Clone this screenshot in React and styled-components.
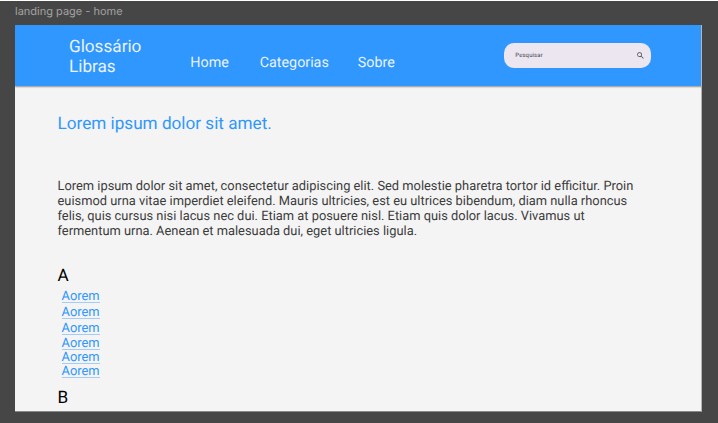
import React from "react";
import styled, { createGlobalStyle } from "styled-components";

const GlobalStyle = createGlobalStyle`
  * { box-sizing: border-box; }
  body { margin: 0; background: #464646; font-family: Roboto, sans-serif; text-rendering: geometricPrecision; }
  h1, h2, p, ul { margin: 0; padding: 0; font-weight: 400; }
`;

const Canvas = styled.div`
  width: 718px;
  height: 423px;
  overflow: hidden;
  border-top: 1px solid #fff;
  background: #464646;
  padding-left: 15px;
`;

const FrameLabel = styled.div`
  height: 24px;
  padding-top: 3px;
  font: 400 11px/14px Inter, sans-serif;
  color: #a2a2a2;
`;

const Frame = styled.main`
  width: 687px;
  height: 387px;
  overflow: hidden;
  background: #f4f4f4;
  border-right: 1px solid #b4b4b4;
  border-bottom: 1px solid #858a8a;
`;

const Header = styled.header`
  display: flex;
  width: 687px;
  height: 61px;
  padding-left: 54px;
  background: #3097fe;
  box-shadow: 0 1px 1.5px rgba(0, 0, 0, 0.4);
`;

const Brand = styled.div`
  width: 121.3px;
  padding-top: 12px;
  font-size: 17.15px;
  line-height: 20px;
  color: #e9f3ff;
`;

const Nav = styled.nav`
  display: flex;
  gap: 31px;
  width: 314px;
  padding-top: 29px;
`;

const NavLink = styled.a`
  font-size: 14.3px;
  line-height: 18px;
  color: #e9f3ff;

  &:last-child { margin-left: -2px; }
`;

const Search = styled.label`
  display: flex;
  align-items: center;
  justify-content: space-between;
  width: 147px;
  height: 25px;
  margin-top: 18px;
  padding: 0 6px 0 11px;
  border-radius: 10px;
  background: #ece6f0;
  color: #49454f;
  font-size: 6px;
  letter-spacing: 0.1px;
`;

const Content = styled.section`
  padding: 28px 42.5px 0;
`;

const Title = styled.h1`
  height: 65px;
  font-size: 17.15px;
  line-height: 20px;
  color: #3097fe;
`;

const Intro = styled.p`
  height: 87px;
  font-size: 12.87px;
  line-height: 15px;
  color: #3c3c3c;
  white-space: nowrap;
`;

const Letter = styled.h2`
  font-size: 17.15px;
  line-height: 20px;
  color: #000;
`;

const Terms = styled.ul`
  height: 102px;
  padding: 3px 0 0 4.1px;
  list-style: none;
`;

const Term = styled.li`
  height: ${(p) => p.$step}px;
  font-size: 12.87px;
  line-height: 15px;
`;

const TermLink = styled.a`
  display: inline-block;
  height: 14px;
  border-bottom: 1px solid #a3cdf8;
  color: #3097fe;
`;

const steps = [16, 15.5, 15.5, 14, 13.5, 14];

export default function App() {
  return (
    <>
      <GlobalStyle />
      <Canvas>
        <FrameLabel>landing page - home</FrameLabel>
        <Frame>
          <Header>
            <Brand>Glossário<br />Libras</Brand>
            <Nav>
              <NavLink>Home</NavLink>
              <NavLink>Categorias</NavLink>
              <NavLink>Sobre</NavLink>
            </Nav>
            <Search>
              <span>Pesquisar</span>
              <svg width="9" height="9" viewBox="0 0 24 24" fill="currentColor">
                <path d="M15.5 14h-.79l-.28-.27A6.47 6.47 0 0 0 16 9.5 6.5 6.5 0 1 0 9.500 16c1.610 0 3.090-.59 4.230-1.570l.27.28v.79l5 4.990L20.490 19l-4.990-5zm-6 0C7.010 14 5 11.990 5 9.500S7.010 5 9.500 5 14 7.010 14 9.500 11.990 14 9.500 14z" />
              </svg>
            </Search>
          </Header>
          <Content>
            <Title>Lorem ipsum dolor sit amet.</Title>
            <Intro>
              Lorem ipsum dolor sit amet, consectetur adipiscing elit. Sed molestie pharetra tortor id efficitur. Proin<br />
              euismod urna vitae imperdiet eleifend. Mauris ultricies, est eu ultrices bibendum, diam nulla rhoncus<br />
              felis, quis cursus nisi lacus nec dui. Etiam at posuere nisl. Etiam quis dolor lacus. Vivamus ut<br />
              fermentum urna. Aenean et malesuada dui, eget ultricies ligula.
            </Intro>
            <Letter>A</Letter>
            <Terms>
              {steps.map((step, i) => (
                <Term key={i} $step={step}><TermLink>Aorem</TermLink></Term>
              ))}
            </Terms>
            <Letter>B</Letter>
          </Content>
        </Frame>
      </Canvas>
    </>
  );
}
